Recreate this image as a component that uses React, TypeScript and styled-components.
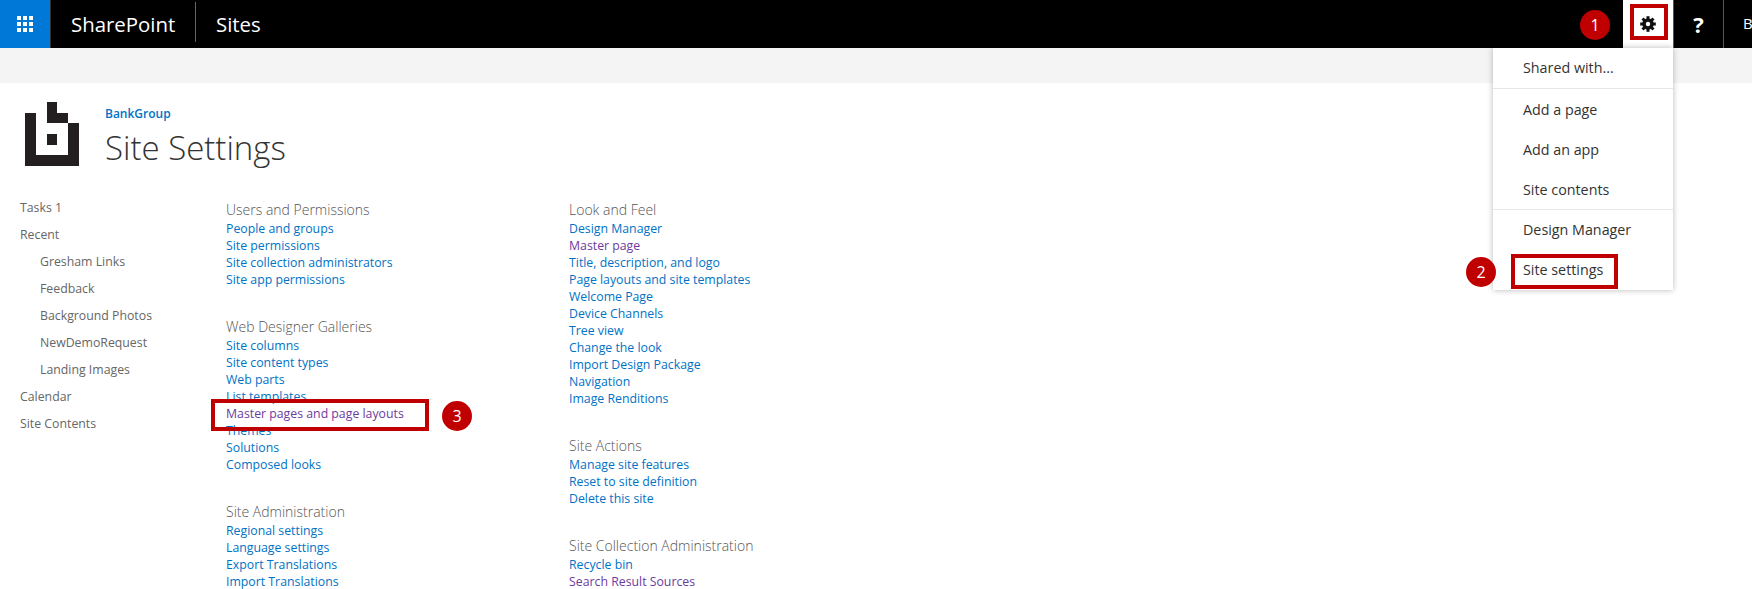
import React from "react";
import styled, { createGlobalStyle } from "styled-components";

const GlobalStyle = createGlobalStyle`
  html, body {
    margin: 0;
    padding: 0;
    background: #fff;
    font-family: "Open Sans", "Liberation Sans", sans-serif;
  }
`;

const Page = styled.div`
  position: relative;
  width: 1752px;
  height: 589px;
  overflow: hidden;
`;

const TopBar = styled.header`
  display: flex;
  align-items: stretch;
  height: 48px;
  background: #000;
  color: #fff;
`;

const Waffle = styled.div`
  display: grid;
  grid-template-columns: repeat(3, 4px);
  grid-auto-rows: 4px;
  gap: 2px;
  align-content: center;
  justify-content: center;
  width: 50px;
  background: #0078d7;
  border-right: 1px solid #333;

  span {
    background: #fff;
  }
`;

const Brand = styled.div`
  display: flex;
  align-items: center;
  padding-left: 20px;
  width: 124px;
  font-size: 20.4px;
  margin-top: -1px;
`;

const Divider = styled.div`
  width: 1px;
  height: 40px;
  margin-top: 2px;
  background: #666;
`;

const SiteTitle = styled(Brand)`
  flex: 1;
`;

const Tab = styled.div<{ $active?: boolean }>`
  position: relative;
  display: flex;
  align-items: center;
  justify-content: center;
  box-sizing: border-box;
  width: ${(p) => (p.$active ? "51px" : "50px")};
  color: #fff;
  background: ${(p) => (p.$active ? "#fff" : "#000")};
  border-right: 1px solid #555;
  font-size: 22px;
  font-weight: 700;
`;

const UserTab = styled.div`
  width: 28px;
  padding: 13px 0 0 19px;
  box-sizing: border-box;
  font-size: 15px;
  overflow: hidden;
`;

const Menu = styled.nav`
  position: absolute;
  top: 48px;
  right: 0;
  width: 180px;
  height: 242px;
  background: #fff;
  box-shadow: 0 0 6px rgba(0, 0, 0, 0.28);
  z-index: 2;
`;

const MenuGroup = styled.div<{ $tight?: boolean }>`
  box-sizing: border-box;
  padding-top: ${(p) => (p.$tight ? "1px" : "0")};
  margin-bottom: ${(p) => (p.$tight ? "-1px" : "0")};
  & + & {
    border-top: 1px solid #e6e6e6;
  }
`;

const MenuItem = styled.div`
  height: 40px;
  line-height: 40px;
  padding-left: 30px;
  font-size: 14.3px;
  font-weight: 400;
  color: #333;
`;

const Band = styled.div`
  height: 35px;
  background: #f4f4f4;
`;

const Header = styled.div`
  display: flex;
  padding: 19px 0 0 25px;
  height: 96px;
  box-sizing: border-box;
`;

const LogoMark = styled.svg`
  width: 54px;
  height: 64px;
  flex: none;
`;

const Titles = styled.div`
  margin-left: 26px;
`;

const SiteLink = styled.div`
  margin-top: 3px;
  font-size: 12px;
  font-weight: 600;
  line-height: 17px;
  color: #0072c6;
`;

const PageTitle = styled.h1`
  margin: 4px 0 0;
  font-size: 33px;
  font-weight: 300;
  line-height: 44px;
  color: #333;
`;

const Body = styled.div`
  display: flex;
  padding-top: 15px;
`;

const SideNav = styled.ul`
  width: 226px;
  margin: 0;
  padding: 0 0 0 20px;
  box-sizing: border-box;
  list-style: none;
`;

const SideItem = styled.li<{ $nested?: boolean }>`
  height: 27px;
  line-height: 27px;
  padding-left: ${(p) => (p.$nested ? "20px" : "0")};
  font-size: 12.3px;
  color: #666;
`;

const Column = styled.div`
  width: 343px;
  padding-top: 6px;
`;

const Section = styled.section`
  margin-bottom: 29px;
`;

const SectionTitle = styled.h3`
  margin: 0;
  font-size: 14px;
  font-weight: 300;
  line-height: 20px;
  color: #555;
`;

const LinkRow = styled.div<{ $visited?: boolean }>`
  font-size: 12.3px;
  line-height: 17px;
  white-space: nowrap;
  color: ${(p) => (p.$visited ? "#6d3b9e" : "#0072c6")};
`;

const Callout = styled.div<{ $left: number; $top: number; $w: number; $h: number }>`
  position: absolute;
  left: ${(p) => p.$left}px;
  top: ${(p) => p.$top}px;
  width: ${(p) => p.$w}px;
  height: ${(p) => p.$h}px;
  box-sizing: border-box;
  border: 4px solid #c00000;
  z-index: 3;
`;

const Badge = styled.div<{ $left: number; $top: number }>`
  position: absolute;
  left: ${(p) => p.$left}px;
  top: ${(p) => p.$top}px;
  width: 30px;
  height: 30px;
  border-radius: 50%;
  background: #c00000;
  color: #fff;
  font-size: 16px;
  line-height: 30px;
  text-align: center;
  z-index: 3;
`;

const GearIcon = () => (
  <svg width="16" height="16" viewBox="0 0 16 16">
    {[0, 45, 90, 135].map((a) => (
      <rect key={a} x="6.5" y="0.2" width="3" height="15.6" fill="#111" transform={`rotate(${a} 8 8)`} />
    ))}
    <circle cx="8" cy="8" r="5.8" fill="#111" />
    <circle cx="8" cy="8" r="2.2" fill="#fff" />
  </svg>
);

const Logo = () => (
  <LogoMark viewBox="0 0 5 6" shapeRendering="crispEdges">
    <g fill="#231f20">
      <rect x="2" y="0" width="1" height="2" />
      <rect x="3" y="1" width="1" height="1" />
      <rect x="4" y="2" width="1" height="4" />
      <rect x="0" y="1" width="1" height="5" />
      <rect x="0" y="5" width="5" height="1" />
      <rect x="2" y="3" width="1" height="1" />
    </g>
  </LogoMark>
);

type Group = { title: string; links: (string | [string])[] };

// a link wrapped in an array is a visited one
const firstColumn: Group[] = [
  {
    title: "Users and Permissions",
    links: ["People and groups", "Site permissions", "Site collection administrators", "Site app permissions"],
  },
  {
    title: "Web Designer Galleries",
    links: [
      "Site columns",
      "Site content types",
      "Web parts",
      "List templates",
      ["Master pages and page layouts"],
      "Themes",
      "Solutions",
      "Composed looks",
    ],
  },
  {
    title: "Site Administration",
    links: ["Regional settings", "Language settings", "Export Translations", "Import Translations"],
  },
];

const secondColumn: Group[] = [
  {
    title: "Look and Feel",
    links: [
      "Design Manager",
      ["Master page"],
      "Title, description, and logo",
      "Page layouts and site templates",
      "Welcome Page",
      "Device Channels",
      "Tree view",
      "Change the look",
      "Import Design Package",
      "Navigation",
      "Image Renditions",
    ],
  },
  {
    title: "Site Actions",
    links: ["Manage site features", "Reset to site definition", "Delete this site"],
  },
  {
    title: "Site Collection Administration",
    links: ["Recycle bin", ["Search Result Sources"]],
  },
];

const sideItems: [string, boolean][] = [
  ["Tasks 1", false],
  ["Recent", false],
  ["Gresham Links", true],
  ["Feedback", true],
  ["Background Photos", true],
  ["NewDemoRequest", true],
  ["Landing Images", true],
  ["Calendar", false],
  ["Site Contents", false],
];

const renderColumn = (groups: Group[]) => (
  <Column>
    {groups.map((group) => (
      <Section key={group.title}>
        <SectionTitle>{group.title}</SectionTitle>
        {group.links.map((link) =>
          Array.isArray(link) ? (
            <LinkRow key={link[0]} $visited>
              {link[0]}
            </LinkRow>
          ) : (
            <LinkRow key={link}>{link}</LinkRow>
          )
        )}
      </Section>
    ))}
  </Column>
);

const App: React.FC = () => {
  return (
    <Page>
      <GlobalStyle />
      <TopBar>
        <Waffle>
          {Array.from({ length: 9 }).map((_, i) => (
            <span key={i} />
          ))}
        </Waffle>
        <Brand>SharePoint</Brand>
        <Divider />
        <SiteTitle>Sites</SiteTitle>
        <Tab $active>
          <GearIcon />
          <Menu>
            <MenuGroup>
              <MenuItem>Shared with...</MenuItem>
            </MenuGroup>
            <MenuGroup $tight>
              <MenuItem>Add a page</MenuItem>
              <MenuItem>Add an app</MenuItem>
              <MenuItem>Site contents</MenuItem>
            </MenuGroup>
            <MenuGroup>
              <MenuItem>Design Manager</MenuItem>
              <MenuItem>Site settings</MenuItem>
            </MenuGroup>
          </Menu>
        </Tab>
        <Tab>?</Tab>
        <UserTab>B</UserTab>
      </TopBar>
      <Band />
      <Header>
        <Logo />
        <Titles>
          <SiteLink>BankGroup</SiteLink>
          <PageTitle>Site Settings</PageTitle>
        </Titles>
      </Header>
      <Body>
        <SideNav>
          {sideItems.map(([label, nested]) => (
            <SideItem key={label} $nested={nested}>
              {label}
            </SideItem>
          ))}
        </SideNav>
        {renderColumn(firstColumn)}
        {renderColumn(secondColumn)}
      </Body>

      <Callout $left={1630} $top={4} $w={38} $h={36} />
      <Callout $left={1511} $top={254} $w={107} $h={35} />
      <Callout $left={211} $top={399} $w={218} $h={32} />
      <Badge $left={1580} $top={10}>1</Badge>
      <Badge $left={1466} $top={257}>2</Badge>
      <Badge $left={442} $top={401}>3</Badge>
    </Page>
  );
};

export default App;
